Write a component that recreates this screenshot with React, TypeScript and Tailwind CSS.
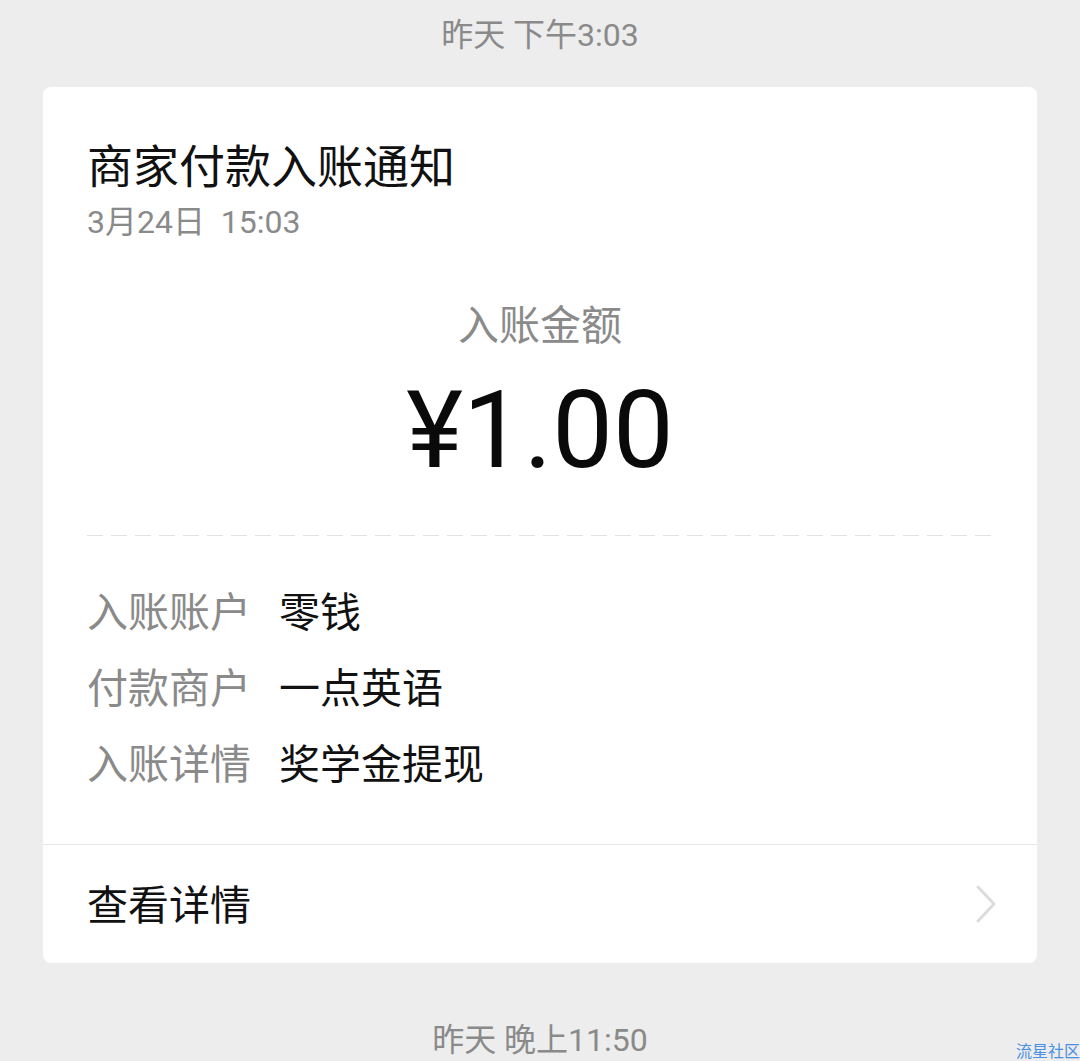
import React from "react";

const font = { fontFamily: 'Roboto, "Noto Sans CJK SC", sans-serif' };

function Row({ label, value }: { label: string; value: string }) {
  return (
    <div className="flex items-center h-[76px] text-[41px] leading-[76px]">
      <div className="w-[192px] shrink-0 text-[#8a8a8a]">{label}</div>
      <div className="text-[#111111]">{value}</div>
    </div>
  );
}

export default function App() {
  return (
    <div
      className="relative w-[1080px] h-[1061px] overflow-hidden bg-[#ededed]"
      style={font}
    >
      <div className="pt-[15px] h-[55px] text-center text-[32px] leading-[40px] text-[#8a8a8a]">
        昨天 下午3:03
      </div>

      <div className="mx-[43px] mt-[32px] bg-white rounded-[8px]">
        <div className="px-[44px] pt-[52px]">
          <div className="text-[46px] leading-[56px] text-[#111111]">
            商家付款入账通知
          </div>
          <div className="mt-[7px] text-[32px] leading-[40px] text-[#8a8a8a] whitespace-pre">
            {"3月24日  15:03"}
          </div>

          <div className="mt-[58px] text-center text-[41px] leading-[52px] text-[#8a8a8a]">
            入账金额
          </div>
          <div className="mt-[24px] text-center text-[108px] leading-[108px] text-[#0a0a0a]">
            ¥1.00
          </div>

          <div className="mt-[51px] -mr-[4px] h-px bg-[repeating-linear-gradient(to_right,#e2e2e2_0,#e2e2e2_16px,transparent_16px,transparent_24px)]" />

          <div className="pt-[39px] pb-[41px]">
            <Row label="入账账户" value="零钱" />
            <Row label="付款商户" value="一点英语" />
            <Row label="入账详情" value="奖学金提现" />
          </div>
        </div>

        <div className="h-px bg-[#e6e6e6]" />

        <div className="h-[118px] pl-[44px] pr-[40px] flex items-center justify-between">
          <div className="text-[41px] leading-[52px] text-[#111111] pt-[4px]">
            查看详情
          </div>
          <svg width="22" height="38" viewBox="0 0 22 38" fill="none">
            <polyline
              points="3,2 19,19 3,36"
              stroke="#dcdcdc"
              strokeWidth="3"
              strokeLinecap="round"
              strokeLinejoin="round"
            />
          </svg>
        </div>
      </div>

      <div className="mt-[57px] text-center text-[32px] leading-[40px] text-[#8a8a8a]">
        昨天 晚上11:50
      </div>

      <div className="absolute right-0 bottom-0 text-[16px] leading-[18px] text-[#4a90e2]">
        流星社区
      </div>
    </div>
  );
}
